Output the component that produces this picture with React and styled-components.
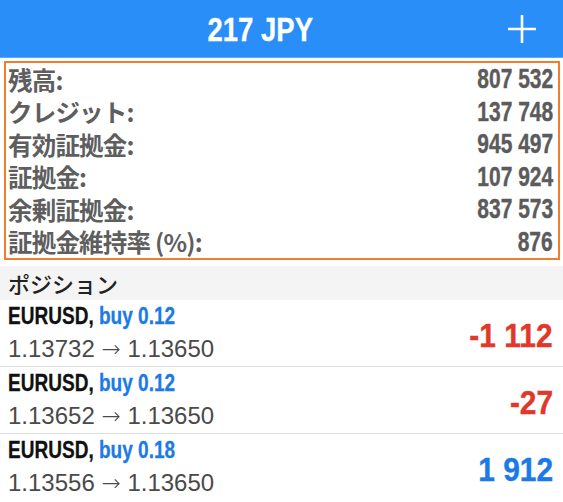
import React from 'react';
import styled, { createGlobalStyle } from 'styled-components';

// ----- GLOBAL

const GlobalStyle = createGlobalStyle`
	html, body {
		margin: 0;
		padding: 0;
		background: #ffffff;
	}
	body {
		width: 563px;
		height: 502px;
		overflow: hidden;
		font-family: "Noto Sans CJK JP", "Liberation Sans", sans-serif;
	}
`;

// ----- STYLED COMPONENTS

// bold narrow type, squeezed from Liberation Sans (no condensed face installed)
const Narrow = styled.span`
	display: inline-block;
	white-space: nowrap;
	font-family: "Liberation Sans", Arial, sans-serif;
	font-weight: 700;
	font-size: ${({ $size }) => $size}px;
	line-height: 1;
	-webkit-text-stroke: ${({ $stroke }) => $stroke || 0}px currentColor;
	transform: scaleX(${({ $squeeze }) => $squeeze});
	transform-origin: ${({ $origin }) => $origin || 'center'};
`;

const Screen = styled.div`
	display: flex;
	flex-direction: column;
	width: 563px;
	height: 502px;
`;
const Header = styled.header`
	height: 57px;
	background: #2a8ef9;
	display: grid;
	grid-template-columns: 1fr auto 1fr;
	align-items: center;
	border-bottom: 1px solid #5aa8fb;
`;
const Title = styled.h1`
	grid-column: 2;
	margin: 0 42px 0 0;
	color: #ffffff;
	line-height: 1;
`;
const AddButton = styled.button`
	justify-self: end;
	margin-right: 27px;
	width: 28px;
	height: 28px;
	padding: 0;
	border: 0;
	background: none;
	display: flex;
	align-items: center;
	justify-content: center;
`;
const AccountBox = styled.section`
	margin: 3px 3px 6px 4px;
	border: 2px solid #ef7e2d;
	display: flex;
	flex-direction: column;
	padding: 0 5px 0 2px;
`;
const AccountRow = styled.div`
	display: flex;
	justify-content: space-between;
	align-items: center;
	height: 32.5px;
	color: #5b5b5b;
`;
const AccountLabel = styled.span`
	font-family: "Noto Sans CJK JP", sans-serif;
	font-weight: 700;
	font-size: 24.5px;
	letter-spacing: -0.8px;
	color: #5e5e5e;
`;
const SectionHeader = styled.div`
	height: 34px;
	background: #f4f4f4;
	display: flex;
	align-items: center;
	padding-left: 8px;
	font-family: "Noto Sans CJK JP", sans-serif;
	font-weight: 500;
	font-size: 22px;
	color: #222222;
`;
const PositionRow = styled.div`
	height: 66px;
	display: flex;
	align-items: center;
	justify-content: space-between;
	padding: 0 10px 0 8px;
	border-bottom: 1px solid #dedede;

	&:last-child {
		border-bottom: 0;
	}
`;
const PositionInfo = styled.div`
	display: flex;
	flex-direction: column;
`;
const SymbolLine = styled.div`
	display: flex;
	align-items: center;
	height: 31px;
	color: #111111;
`;
const Trade = styled.span`
	color: #1b7ae6;
`;
const PriceLine = styled.div`
	font-family: "Liberation Sans", sans-serif;
	font-weight: 400;
	font-size: 24px;
	line-height: 31px;
	color: #4a4a4a;
`;
const Arrow = styled.span`
	font-family: "DejaVu Sans", sans-serif;
	font-weight: 300;
	font-size: 23px;
	color: #4a4a4a;
`;
const Profit = styled.div`
	margin-top: 4px;
	color: ${({ $negative }) => ($negative ? '#e0392b' : '#1b7ae6')};
`;

// ----- DATA

const account = [
	['残高:', '807 532'],
	['クレジット:', '137 748'],
	['有効証拠金:', '945 497'],
	['証拠金:', '107 924'],
	['余剰証拠金:', '837 573'],
	['証拠金維持率 (%):', '876'],
];

const positions = [
	{ symbol: 'EURUSD', trade: 'buy 0.12', open: '1.13732', current: '1.13650', profit: '-1 112' },
	{ symbol: 'EURUSD', trade: 'buy 0.12', open: '1.13652', current: '1.13650', profit: '-27' },
	{ symbol: 'EURUSD', trade: 'buy 0.18', open: '1.13556', current: '1.13650', profit: '1 912' },
];

// ----- PAGE

export default function App() {
	return (
		<Screen>
			<GlobalStyle />
			<Header>
				<Title>
					<Narrow $size={33.5} $squeeze={0.82} $stroke={0.3}>217 JPY</Narrow>
				</Title>
				<AddButton aria-label="add">
					<svg width="28" height="28" viewBox="0 0 28 28">
						<path d="M14 0V28M0 14H28" stroke="#ffffff" strokeWidth="2.6" />
					</svg>
				</AddButton>
			</Header>
			<AccountBox>
				{account.map(([label, value]) => (
					<AccountRow key={label}>
						<AccountLabel>{label}</AccountLabel>
						<Narrow $size={28} $squeeze={0.75} $stroke={0.4} $origin="right">{value}</Narrow>
					</AccountRow>
				))}
			</AccountBox>
			<SectionHeader>ポジション</SectionHeader>
			{positions.map((p, i) => (
				<PositionRow key={i}>
					<PositionInfo>
						<SymbolLine>
							<Narrow $size={23.5} $squeeze={0.81} $stroke={0.3} $origin="left">
								{p.symbol}, <Trade>{p.trade}</Trade>
							</Narrow>
						</SymbolLine>
						<PriceLine>
							{p.open} <Arrow>→</Arrow> {p.current}
						</PriceLine>
					</PositionInfo>
					<Profit $negative={p.profit.startsWith('-')}>
						<Narrow $size={34} $squeeze={0.88} $stroke={0.4} $origin="right">{p.profit}</Narrow>
					</Profit>
				</PositionRow>
			))}
		</Screen>
	);
}
